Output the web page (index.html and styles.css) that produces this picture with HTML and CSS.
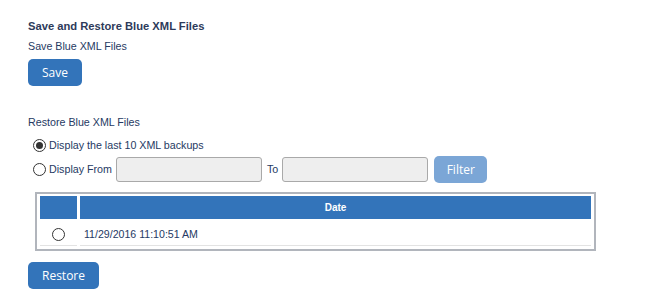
FILE: index.html
```html
<!DOCTYPE html>
<html lang="en">
<head>
    <meta charset="UTF-8">
    <title>Save and Restore Blue XML Files</title>
    <link rel="stylesheet" href="styles.css">
</head>
<body>
    <div class="page">
        <h2 class="title">Save and Restore Blue XML Files</h2>

        <div class="section">
            <p class="label">Save Blue XML Files</p>
            <button class="btn btn-primary" id="save-btn">Save</button>
        </div>

        <div class="section restore">
            <p class="label">Restore Blue XML Files</p>

            <div class="choice">
                <input type="radio" name="mode" id="mode-last" checked>
                <label for="mode-last">Display the last 10 XML backups</label>
            </div>

            <div class="choice">
                <input type="radio" name="mode" id="mode-range">
                <label for="mode-range">Display From</label>
                <input type="text" class="field" id="date-from">
                <span class="to">To</span>
                <input type="text" class="field" id="date-to">
                <button class="btn btn-primary btn-filter" disabled>Filter</button>
            </div>

            <div class="grid-box">
                <table class="backups">
                    <thead>
                        <tr>
                            <th class="col-pick"></th>
                            <th>Date</th>
                        </tr>
                    </thead>
                    <tbody>
                        <tr>
                            <td class="col-pick"><input type="radio" name="backup"></td>
                            <td>11/29/2016 11:10:51 AM</td>
                        </tr>
                    </tbody>
                </table>
            </div>

            <button class="btn btn-primary" id="restore-btn">Restore</button>
        </div>
    </div>
</body>
</html>
```

FILE: styles.css
```css
:root {
    --primary: #3374ba;
    --text: #263a63;
    --title: #2d3a5a;
    --field-bg: #eeeeee;
    --field-border: #a9a9a9;
}

* {
    box-sizing: border-box;
}

body {
    margin: 0;
    background: #ffffff;
    color: var(--text);
    font-family: "Liberation Sans", Arial, sans-serif;
    font-size: 11px;
}

.page {
    padding: 20px 0 0 28px;
}

.title {
    margin: 0 0 8px;
    font-size: 11.2px;
    font-weight: bold;
    color: var(--title);
}

.label {
    margin: 0 0 7px;
    font-size: 10.7px;
}

.restore {
    margin-top: 30px;
}

.restore .label {
    margin-bottom: 5px;
}

.btn {
    display: inline-block;
    height: 27px;
    padding: 0 14px;
    border: none;
    border-radius: 5px;
    font-family: "Open Sans", sans-serif;
    font-size: 12px;
    color: #ffffff;
    cursor: pointer;
}

.btn-primary {
    background-color: var(--primary);
}

.btn-primary:disabled {
    background-color: #7ba6d6;
    cursor: default;
}

.choice {
    display: flex;
    align-items: center;
    margin-left: 5px;
    height: 24px;
    font-size: 10.7px;
}

.choice label {
    margin-left: 3px;
}

input[type="radio"] {
    appearance: none;
    width: 13px;
    height: 13px;
    margin: 0;
    border: 1px solid #333333;
    border-radius: 50%;
    background: #ffffff;
    display: inline-grid;
    place-items: center;
}

input[type="radio"]:checked::before {
    content: "";
    width: 7px;
    height: 7px;
    border-radius: 50%;
    background: #333333;
}

.field {
    width: 146px;
    height: 25px;
    margin-left: 4px;
    border: 1px solid var(--field-border);
    border-radius: 3px;
    background: var(--field-bg);
}

.to {
    margin-left: 5px;
}

.btn-filter {
    margin-left: 6px;
    width: 53px;
    padding: 0;
}

.grid-box {
    width: 561px;
    margin: 11px 0 11px 7px;
    padding: 2px 0 3px;
    border: 2px solid #b1b5bc;
}

.backups {
    width: 100%;
    border-collapse: separate;
    border-spacing: 3px 0;
}

.backups th {
    height: 23px;
    background-color: var(--primary);
    color: #ffffff;
    font-size: 10px;
    font-weight: bold;
    text-align: center;
    padding: 0;
}

.backups td {
    height: 27px;
    padding: 4px 4px 0;
    border-bottom: 1px solid #e3e3e3;
    font-size: 10.6px;
}

.backups .col-pick {
    width: 37px;
    text-align: center;
    padding: 4px 0 0;
}

.backups .col-pick input {
    vertical-align: middle;
}
```
